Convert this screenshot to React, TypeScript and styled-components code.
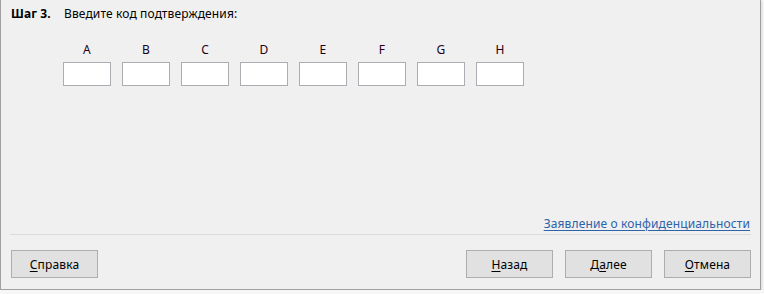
import React from "react";
import styled, { createGlobalStyle } from "styled-components";

const Global = createGlobalStyle`
  html, body { margin: 0; padding: 0; background: #f7f7f7; }
  body { font-family: "Noto Sans", "Segoe UI", sans-serif; }
  * { box-sizing: border-box; }
`;

const Dialog = styled.div`
  width: 761px;
  height: 290px;
  background: #f0f0f0;
  border: 1px solid #a0a0a0;
  border-top: none;
  box-shadow: 1px 1px 2px rgba(0, 0, 0, 0.12);
  display: flex;
  flex-direction: column;
  padding: 6px 9px 11px 9px;
  font-size: 12px;
  line-height: 16px;
  letter-spacing: 0.13px;
  color: #000;
`;

const Header = styled.div`
  display: flex;
  padding-left: 1px;
`;

const StepLabel = styled.span`
  font-weight: 700;
  width: 53px;
`;

const Instruction = styled.span``;

const Codes = styled.div`
  display: flex;
  gap: 11px;
  margin-top: 20px;
  margin-left: 53px;
`;

const CodeCol = styled.div`
  display: flex;
  flex-direction: column;
  align-items: center;
  gap: 4px;
`;

const CodeLabel = styled.span`
  color: #220018;
`;

const CodeInput = styled.div`
  width: 48px;
  height: 24px;
  background: #fff;
  border: 1px solid #abadb3;
`;

const Spacer = styled.div`
  flex: 1;
`;

const LinkRow = styled.div`
  display: flex;
  justify-content: flex-end;
  padding-right: 1px;
`;

const Link = styled.a`
  color: #2e63a8;
  text-decoration: underline;
  text-underline-offset: 2px;
  cursor: pointer;
`;

const Separator = styled.div`
  height: 1px;
  background: #dadada;
  margin: 2px 0 15px;
`;

const Footer = styled.div`
  display: flex;
  align-items: center;
  padding-left: 1px;
  gap: 12px;
`;

const Button = styled.button<{ $push?: boolean }>`
  width: 87px;
  height: 28px;
  background: #e1e1e1;
  border: 1px solid #adadad;
  font-family: inherit;
  font-size: 12px;
  letter-spacing: 0.13px;
  color: #000;
  padding: 0;
  margin-left: ${(p) => (p.$push ? "auto" : "0")};
`;

const U = styled.span`
  text-decoration: underline;
  text-underline-offset: 2px;
`;

const letters = ["A", "B", "C", "D", "E", "F", "G", "H"];

export default function App() {
  return (
    <>
      <Global />
      <Dialog>
        <Header>
          <StepLabel>Шаг 3.</StepLabel>
          <Instruction>Введите код подтверждения:</Instruction>
        </Header>
        <Codes>
          {letters.map((l) => (
            <CodeCol key={l}>
              <CodeLabel>{l}</CodeLabel>
              <CodeInput />
            </CodeCol>
          ))}
        </Codes>
        <Spacer />
        <LinkRow>
          <Link>Заявление о конфиденциальности</Link>
        </LinkRow>
        <Separator />
        <Footer>
          <Button>
            <U>С</U>правка
          </Button>
          <Button $push>
            <U>Н</U>азад
          </Button>
          <Button>
            Д<U>а</U>лее
          </Button>
          <Button>
            <U>О</U>тмена
          </Button>
        </Footer>
      </Dialog>
    </>
  );
}
